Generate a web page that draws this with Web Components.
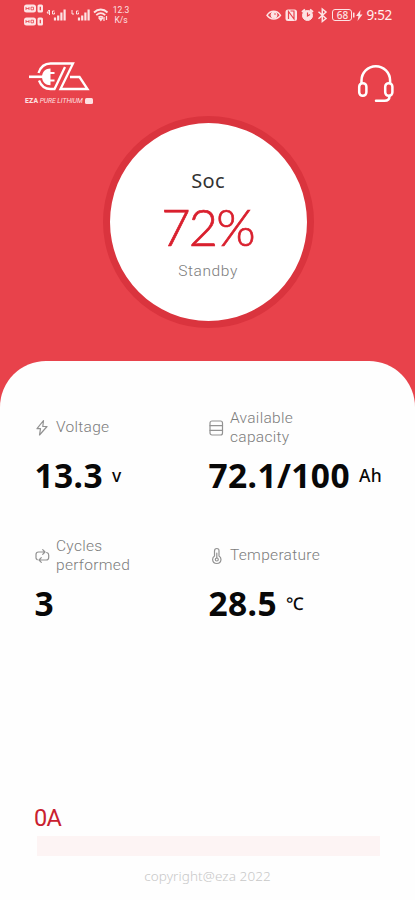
<!DOCTYPE html>
<html lang="en">
<head>
<meta charset="utf-8">
<meta name="viewport" content="width=device-width">
<title>EZA battery</title>
<style>
html,body{margin:0;height:100%}
body{overflow:hidden;background:#e8424b;font-family:"Noto Sans","Open Sans",sans-serif}
</style>
</head>
<body>
<battery-app></battery-app>
<script>
const define = (name, html) => customElements.define(name, class extends HTMLElement {
  constructor() {
    super();
    const t = document.createElement('template');
    t.innerHTML = html;
    this.attachShadow({mode: 'open'}).append(t.content.cloneNode(true));
  }
});

define('status-bar', `
<style>
:host{display:flex;justify-content:space-between;height:30px;padding:0 23px 0 24px;box-sizing:border-box;color:#fde3e4}
svg{display:block;overflow:visible}
.side{display:flex;align-items:flex-start}
.speed{font:8.500px/10px Roboto,sans-serif;padding:5px 0 0 3px;text-align:center;width:18px}
.time{font-size:13.500px;line-height:18px;padding-top:6px;letter-spacing:-.3px;margin-left:2px;color:#fff0f0}
.bat{font-size:10px;font-weight:500;line-height:11px;width:18px;height:10px;border:1px solid;border-radius:3px;margin-top:9px;display:flex;justify-content:center;align-items:center}
</style>
<div class="side">
<svg width="85" height="30" viewBox="24 0 85 30" fill="none" stroke="currentColor">
  <g fill="currentColor" stroke="none"><rect x="24" y="4.5" width="12" height="8" rx="2.5"/><rect x="37.5" y="4.5" width="5.5" height="8" rx="1.5"/><rect x="24" y="17.5" width="12" height="8" rx="2.5"/><rect x="37.5" y="17.5" width="5.5" height="8" rx="1.5"/></g>
  <g stroke="#e8424b"><path d="M26 7v3M29 7v3M26 8.5h3M31 7.2h2.500v2.600H31z M26 20v3M29 20v3M26 21.500h3M31 20.200h2.500v2.600H31z" stroke-width=".8"/><path d="M40.300 6.800v3.500M40.300 19.800v3.500" stroke-width="1.300"/></g>
  <path d="M49 10l-2 3h3M49.500 10v5M54.500 11h-2v3h2v-1.500M72 10v4h2M78.500 11h-2v3h2v-1.500" stroke-width="1"/>
  <g stroke-width="2.200"><path d="M55 20.500v-3M58.200 20.500v-5M61.400 20.500v-8M64.600 20.500v-11M79 20.500v-3M82.200 20.500v-5M85.400 20.500v-8M88.600 20.500v-11"/></g>
  <g stroke-width="1.800"><path d="M94 12.500c4-4 9.500-4 13.500 0M96.300 15.200c2.800-2.600 6-2.600 8.900 0M98.500 17.500c1.500-1.200 3-1.200 4.500 0"/></g>
  <path d="M100.800 20.500l-1.500-2h3zM104 21v-4M106.500 16v4" stroke-width="1.200" fill="currentColor"/>
</svg>
<div class="speed">12.3<br>K/s</div>
</div>
<div class="side">
<svg width="64" height="30" viewBox="268.500 0 64 30" fill="none" stroke="currentColor">
  <path d="M267.500 15.300c3.500-5.500 10-5.500 13.500 0c-3.500 5-10 5-13.500 0z" stroke-width="1.500"/><circle cx="274.500" cy="15" r="3" fill="currentColor"/><circle cx="275.500" cy="14" r=".8" fill="#e8424b" stroke="none"/>
  <rect x="286" y="9.500" width="11.500" height="11.500" rx="2.500" fill="currentColor" stroke="none"/><path d="M289 19v-7.500l5.500 7.500v-7.500M291 11l4 0" stroke="#e8424b" stroke-width="1.200"/>
  <circle cx="308" cy="15.500" r="5" fill="currentColor"/><path d="M302.500 12l3-2.500M313.500 12l-3-2.500" stroke-width="2"/><path d="M308 12.500v3.500l2.500-1.500" stroke="#e8424b" stroke-width="1.200"/>
  <path d="M319 11.700l7.500 6.800l-3.700 3V9l3.700 3l-7.500 6.800" stroke-width="1.500"/>
</svg>
<div class="bat">68</div>
<svg width="12" height="30" viewBox="0 0 12 30" fill="currentColor"><rect x="1" y="12.500" width="1.500" height="5" rx=".5"/><path d="M8.500 10L4 16h2.500L5.500 21L10.500 14.500H8z"/></svg>
<div class="time">9:52</div>
</div>`);

define('brand-logo', `
<style>:host{display:block;width:70px;height:46px;color:#fff}svg{display:block}
.tag{display:flex;align-items:center;font:6.800px/8px Roboto,sans-serif;white-space:nowrap;margin-top:1px;color:#fde0e1}
b{font-weight:800;margin-right:1.500px;letter-spacing:.2px}i{letter-spacing:-.05px}.ev{display:block;width:8.500px;height:5.500px;border-radius:1.500px;background:currentColor;margin-left:2px}</style>
<svg width="70" height="35" viewBox="25 61 70 35" fill="none" stroke="currentColor" stroke-width="2.300">
  <path d="M29 76.800h14" stroke-width="2.600"/>
  <path d="M50.500 68.500c-5 0-8.500 3.500-8.500 8.300c0 5 3.500 8.500 8.500 8.500z" fill="currentColor" stroke="none"/>
  <path d="M49 73h5.500M49 80.500h5.500" stroke-width="2"/>
  <path d="M38.500 73c2-6 6.500-9.500 12-9.500H73L60.500 89h27L79.500 77H70M39 80.500c2 5.300 6 8.500 11.500 8.500H54.500L65 67"/>
</svg>
<div class="tag"><b>EZA</b><i>PURE LITHIUM</i><span class="ev"></span></div>`);

define('support-button', `
<style>:host{display:block;width:38px;height:40px;color:#fff}svg{display:block}</style>
<svg width="38" height="40" viewBox="357 64 38 40" fill="none" stroke="currentColor" stroke-width="2.500" stroke-linecap="round" stroke-linejoin="round">
  <path d="M361.500 83v-2.500a14.300 14.300 0 0 1 28.600 0V83"/>
  <rect x="359.200" y="83.200" width="7.200" height="12.600" rx="3.500"/><rect x="385.200" y="83.200" width="7.200" height="12.600" rx="3.500"/>
  <path d="M389.500 96c0 3-2 4.800-5 4.800h-8.500"/>
</svg>`);

define('soc-gauge', `
<style>
:host{display:flex;flex-direction:column;align-items:center;width:211px;height:212px;box-sizing:border-box;border:7.500px solid #da343e;border-radius:50%;background:#fff;padding-top:44px}
.t{font-size:20px;line-height:28px;color:#333;letter-spacing:.3px}
.v{font-family:Lato,sans-serif;font-size:50.500px;line-height:68px;color:#d9202e;letter-spacing:-1.800px;font-weight:300;-webkit-text-stroke:.7px #d9202e;margin:-2px 0 2px -1px}
.s{font:300 15.500px/20px Roboto,sans-serif;color:#7c7c7c;letter-spacing:.6px;margin-top:-2px}
</style>
<div class="t"><slot name="title"></slot></div><div class="v"><slot></slot></div><div class="s"><slot name="state"></slot></div>`);

define('metric-tile', `
<style>
:host{display:block;height:128px}
.label{display:flex;align-items:center;height:38px;font:300 15.500px/18.500px Roboto,sans-serif;color:#7c7c7c;letter-spacing:.3px;padding-top:1px;box-sizing:border-box}
.ic{width:22px;flex:none;display:block}
::slotted(svg){display:block;overflow:visible}
.val{display:flex;align-items:center;font-size:33.500px;line-height:46px;font-weight:700;color:#080808;margin-top:6px;padding-left:.5px;white-space:nowrap;letter-spacing:.4px}
.u{font-size:17.500px;font-weight:500;margin-left:9px;letter-spacing:.4px}
</style>
<div class="label"><span class="ic"><slot name="icon"></slot></span><span><slot name="label"></slot></span></div>
<div class="val"><slot></slot><span class="u"><slot name="unit"></slot></span></div>`);

define('current-meter', `
<style>
:host{display:block}
.a{font:23.500px/30px Roboto,sans-serif;color:#c9202f;letter-spacing:-.6px}
.bar{height:20px;margin:3px 0 0 3px;width:343px;background:#fdf4f4}
</style>
<div class="a"><slot></slot></div><div class="bar"></div>`);

define('battery-app', `
<style>
:host{display:flex;flex-direction:column;width:415px;height:900px;background:#e8424b;overflow:hidden}
header{display:flex;justify-content:space-between;align-items:flex-start;padding:31px 20px 0 25px;height:86px;box-sizing:border-box}
support-button{margin-top:3px}
soc-gauge{align-self:center;margin-left:1px}
main{flex:1;display:flex;flex-direction:column;margin-top:33px;background:#fefefe;border-radius:46px 46px 0 0;padding:47px 0 0 34px}
.grid{display:grid;grid-template-columns:174px 1fr}
current-meter{margin-top:auto}
footer{text-align:center;margin-left:-34px;font-size:13.500px;line-height:20px;color:#c8c8c8;padding:10px 0 14px;font-weight:300;letter-spacing:.1px}
.ic{fill:none;stroke:#929292;stroke-width:1.200;stroke-linejoin:round;stroke-linecap:round}
</style>
<status-bar></status-bar>
<header><brand-logo></brand-logo><support-button></support-button></header>
<soc-gauge><span slot="title">Soc</span>72%<span slot="state">Standby</span></soc-gauge>
<main>
<div class="grid">
<metric-tile>
  <svg slot="icon" class="ic" width="16" height="18" viewBox="0 0 16 18"><path d="M9.500 1.500L3 9.700h3.500L5.500 16L13 7.500H8.800z"/></svg>
  <span slot="label">Voltage</span>13.3<span slot="unit">v</span>
</metric-tile>
<metric-tile>
  <svg slot="icon" class="ic" width="16" height="18" viewBox="0 0 16 18"><rect x="2" y="2" width="12.500" height="14" rx="2"/><path d="M2 6.700h12.500M2 11.300h12.500"/></svg>
  <span slot="label">Available<br>capacity</span>72.1/100<span slot="unit">Ah</span>
</metric-tile>
<metric-tile>
  <svg slot="icon" class="ic" width="16" height="18" viewBox="0 0 16 18"><path d="M2 11V7.500q0-2.500 2.500-2.500H11M8.700 2.700L11 5L8.700 7.300M12.700 5.500q2 .5 2 2.500v2.500q0 2.500-2.500 2.500H5M7.300 10.700L5 13l2.300 2.300M2 11q.3 1.200 1.300 1.700"/></svg>
  <span slot="label">Cycles<br>performed</span>3
</metric-tile>
<metric-tile>
  <svg slot="icon" class="ic" width="16" height="18" viewBox="0 0 16 18"><path d="M6.500 9V4q0-2.500 2.300-2.500T11 4v5q2 1.300 2 3.500q-.3 4-4.200 4T4.600 12.500Q4.600 10.300 6.500 9zM8.800 6v5"/><circle cx="8.800" cy="12.500" r="1.500"/></svg>
  <span slot="label">Temperature</span>28.5<span slot="unit">℃</span>
</metric-tile>
</div>
<current-meter>0A</current-meter>
<footer>copyright@eza 2022</footer>
</main>`);
</script>
</body>
</html>
